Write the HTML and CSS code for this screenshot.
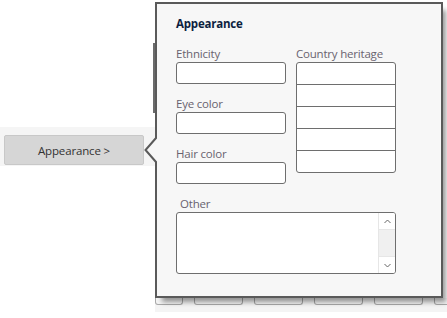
FILE: index.html
```html
<!DOCTYPE html>
<html lang="en">
<head>
  <meta charset="UTF-8" />
  <meta name="viewport" content="width=device-width, initial-scale=1.0" />
  <title>Appearance</title>
  <link rel="stylesheet" href="styles.css">
</head>
<body>
  <div class="page">
    <!-- behind the popup -->
    <div class="bg-thumb"></div>

    <div class="side-band">
      <button class="section-button">Appearance &gt;</button>
    </div>

    <div class="tab-strip">
      <span class="tab tab-first"></span>
      <span class="tab"></span>
      <span class="tab"></span>
      <span class="tab"></span>
      <span class="tab"></span>
      <span class="tab"></span>
    </div>

    <!-- POPUP -->
    <div class="popup">
      <svg class="popup-arrow" width="15" height="28" viewBox="0 0 15 28">
        <polygon points="12,1.5 1.5,14 12,26.5 15,26.5 15,1.5" fill="#f7f7f7" />
        <polyline points="12,0 12,2 1.5,14 12,26 12,28" fill="none" stroke="#5a5a5a" stroke-width="2" />
      </svg>

      <h2 class="popup-title">Appearance</h2>

      <div class="fields">
        <div class="col">
          <label class="label">Ethnicity</label>
          <div class="input"></div>
          <label class="label spaced">Eye color</label>
          <div class="input"></div>
          <label class="label spaced">Hair color</label>
          <div class="input"></div>
        </div>
        <div class="col">
          <label class="label">Country heritage</label>
          <div class="listbox">
            <div class="list-row"></div>
            <div class="list-row"></div>
            <div class="list-row"></div>
            <div class="list-row"></div>
            <div class="list-row"></div>
          </div>
        </div>
      </div>

      <label class="label spaced other-label">Other</label>
      <div class="textarea">
        <div class="scrollbar">
          <div class="scroll-btn scroll-up">
            <svg width="7" height="5" viewBox="0 0 7 5"><polyline points="0.5,4 3.5,1 6.5,4" fill="none" stroke="#666" stroke-width="1" /></svg>
          </div>
          <div class="scroll-track"></div>
          <div class="scroll-btn scroll-down">
            <svg width="7" height="5" viewBox="0 0 7 5"><polyline points="0.5,1 3.5,4 6.5,1" fill="none" stroke="#666" stroke-width="1" /></svg>
          </div>
        </div>
      </div>
    </div>
  </div>
</body>
</html>
```

FILE: styles.css
```css
* {
  margin: 0;
  padding: 0;
  box-sizing: border-box;
}

body {
  background: #fff;
  font-family: 'Open Sans', 'Noto Sans', sans-serif;
  font-size: 12px;
  color: #333;
  overflow: hidden;
}

.page {
  position: relative;
  width: 447px;
  height: 318px;
  overflow: hidden;
}

.bg-thumb {
  position: absolute;
  left: 153px;
  top: 43px;
  width: 3px;
  height: 70px;
  background: #6b6b6b;
}

.side-band {
  margin-top: 127px;
  width: 155px;
  height: 39px;
  padding: 8px 0 0 4px;
  background: #f5f5f5;
}

.section-button {
  width: 140px;
  height: 30px;
  background: #d6d6d6;
  border: 1px solid #c8c8c8;
  border-radius: 2px;
  font-family: inherit;
  font-size: 11.5px;
  letter-spacing: -0.15px;
  color: #333;
}

.tab-strip {
  display: flex;
  gap: 11px;
  margin-top: 132px;
  margin-left: 155px;
  height: 14px;
  background: #f4f4f4;
  overflow: hidden;
}

.tab {
  flex-shrink: 0;
  width: 49px;
  height: 7px;
  border: 1px solid #a9a9a9;
  border-top: none;
  border-radius: 0 0 3px 3px;
}

.tab-first {
  width: 28px;
}

.popup {
  position: absolute;
  left: 155px;
  top: 2px;
  width: 288px;
  height: 296px;
  border: 2px solid #5a5a5a;
  background: #f7f7f7;
  padding: 12px 0 0 19px;
  box-shadow: 5px 6px 5px -2px rgba(0, 0, 0, 0.4);
}

.popup-arrow {
  position: absolute;
  left: -13px;
  top: 132px;
}

.popup-title {
  font-size: 11.5px;
  line-height: 16px;
  font-weight: 700;
  letter-spacing: -0.2px;
  color: #0d1f40;
}

.fields {
  display: grid;
  grid-template-columns: 110px 100px;
  column-gap: 10px;
  margin-top: 14px;
}

.col {
  display: flex;
  flex-direction: column;
}

.label {
  display: block;
  font-size: 11.5px;
  line-height: 16px;
  letter-spacing: -0.2px;
  color: #69636f;
}

.spaced {
  margin-top: 12px;
}

.other-label {
  padding-left: 4px;
}

.input {
  height: 22px;
  background: #fff;
  border: 1px solid #6e6e6e;
  border-radius: 3px;
}

.listbox {
  background: #fff;
  border: 1px solid #6e6e6e;
  border-radius: 3px;
}

.list-row {
  height: 22px;
  border-bottom: 1px solid #6e6e6e;
}

.list-row:last-child {
  height: 21px;
  border-bottom: none;
}

.textarea {
  display: flex;
  justify-content: flex-end;
  width: 220px;
  height: 62px;
  background: #fff;
  border: 1px solid #6e6e6e;
  border-radius: 3px;
  overflow: hidden;
}

.scrollbar {
  display: flex;
  flex-direction: column;
  width: 17px;
  border-left: 1px solid #e6e6e6;
}

.scroll-btn {
  display: flex;
  align-items: center;
  justify-content: center;
  height: 17px;
  background: #fff;
}

.scroll-up {
  border-bottom: 1px solid #e6e6e6;
}

.scroll-down {
  border-top: 1px solid #e6e6e6;
}

.scroll-track {
  flex: 1;
  background: #f0f0f0;
}
```
